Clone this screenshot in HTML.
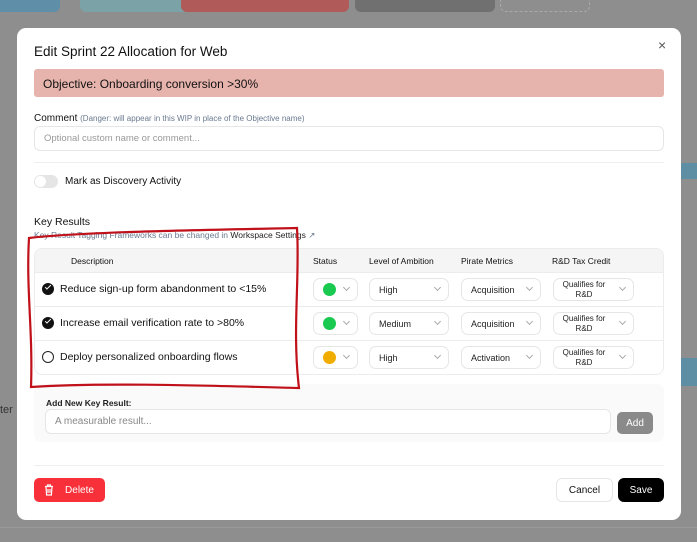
<!DOCTYPE html>
<html><head><style>
*{box-sizing:border-box;margin:0;padding:0}
body{width:697px;height:542px;overflow:hidden;background:#8e8e8e;font-family:"Liberation Sans",sans-serif;position:relative;color:#111}
.a{position:absolute}
.chip{position:absolute;top:-6px;height:18px;border-radius:6px}
.modal{position:absolute;left:17px;top:28px;width:664px;height:492px;background:#fff;border-radius:9px}
.sel{position:absolute;height:23px;border:1px solid #e6e6e6;border-radius:7px;background:#fff;font-size:9px;color:#222;display:flex;align-items:center;padding-left:9px}
.chev{position:absolute;right:8px;top:6px;width:5px;height:5px;border-right:1px solid #aaa;border-bottom:1px solid #aaa;transform:rotate(45deg)}
.dot{width:13px;height:13px;border-radius:50%}
.row{position:absolute;left:0;width:630px;height:34px;border-top:1px solid #ececec}
.desc{position:absolute;left:25px;top:10px;font-size:10.5px;color:#111}
.chk{position:absolute;left:7px;top:10px;width:12px;height:12px;border-radius:50%}
.btn{position:absolute;display:flex;align-items:center;justify-content:center;font-size:10px}
</style></head><body>
<div class="chip" style="left:-10px;width:70px;background:#5f8fa8"></div>
<div class="chip" style="left:80px;width:125px;background:#7ba2a6"></div>
<div class="chip" style="left:181px;width:168px;background:#b05a5a"></div>
<div class="chip" style="left:355px;width:140px;background:#707070"></div>
<div class="chip" style="left:500px;width:90px;border:1px dashed #aaa;background:#8e8e8e"></div>
<div class="a" style="left:680px;top:163px;width:17px;height:16px;background:#5e8ea3"></div>
<div class="a" style="left:680px;top:358px;width:17px;height:28px;background:#5e8ea3"></div>
<div class="a" style="left:0;top:404px;font-size:11px;color:#333">ter</div>
<div class="a" style="left:0;top:527px;width:697px;height:1px;background:#999"></div>

<div class="modal">
 <div class="a" style="left:17px;top:16px;font-size:13.5px">Edit Sprint 22 Allocation for Web</div>
 <div class="a" style="left:641px;top:9px;font-size:14px;color:#555">×</div>
 <div class="a" style="left:17px;top:41px;width:630px;height:28px;background:#e7b4ad;border-radius:3px;font-size:12px;padding:8px 9px">Objective: Onboarding conversion &gt;30%</div>
 <div class="a" style="left:17px;top:85px;font-size:10px">Comment <span style="font-size:8px;color:#6a7a90">(Danger: will appear in this WIP in place of the Objective name)</span></div>
 <div class="a" style="left:17px;top:98px;width:630px;height:25px;border:1px solid #e6e6e6;border-radius:6px;font-size:9.5px;color:#999;padding:6px 9px">Optional custom name or comment...</div>
 <div class="a" style="left:17px;top:134px;width:630px;height:1px;background:#eceef2"></div>
 <div class="a" style="left:17px;top:147px;width:24px;height:13px;border-radius:7px;background:#e5e5e5"><div style="margin:1px;width:11px;height:11px;border-radius:50%;background:#fff"></div></div>
 <div class="a" style="left:48px;top:148px;font-size:10px">Mark as Discovery Activity</div>
 <div class="a" style="left:17px;top:188px;font-size:10.5px">Key Results</div>
 <div class="a" style="left:17px;top:202px;font-size:8.5px;color:#6a7a90">Key Result Tagging Frameworks can be changed in <span style="color:#222">Workspace Settings</span> ↗</div>
 <div class="a" style="left:17px;top:220px;width:630px;height:127px;border:1px solid #ececec;border-radius:8px;overflow:hidden">
  <div class="a" style="left:0;top:0;width:630px;height:23px;background:#f5f5f5;font-size:8.5px">
   <span class="a" style="left:36px;top:7px">Description</span>
   <span class="a" style="left:278px;top:7px">Status</span>
   <span class="a" style="left:334px;top:7px">Level of Ambition</span>
   <span class="a" style="left:426px;top:7px">Pirate Metrics</span>
   <span class="a" style="left:517px;top:7px">R&amp;D Tax Credit</span>
  </div>
  <div class="row" style="top:23px"><div class="chk" style="background:#111"></div><div class="a" style="left:10px;top:12px;width:6px;height:3px;border-left:1.5px solid #fff;border-bottom:1.5px solid #fff;transform:rotate(-45deg)"></div><div class="desc">Reduce sign-up form abandonment to &lt;15%</div>
   <div class="sel" style="left:278px;top:5px;width:45px"><div class="dot" style="background:#1ac950"></div><div class="chev"></div></div>
   <div class="sel" style="left:334px;top:5px;width:80px">High<div class="chev"></div></div>
   <div class="sel" style="left:426px;top:5px;width:80px">Acquisition<div class="chev"></div></div>
   <div class="sel" style="left:518px;top:5px;width:81px;font-size:8px;line-height:10px;text-align:center;padding-left:0;justify-content:flex-start"><span style="width:60px">Qualifies for R&amp;D</span><div class="chev"></div></div>
  </div>
  <div class="row" style="top:57px"><div class="chk" style="background:#111"></div><div class="a" style="left:10px;top:12px;width:6px;height:3px;border-left:1.5px solid #fff;border-bottom:1.5px solid #fff;transform:rotate(-45deg)"></div><div class="desc">Increase email verification rate to &gt;80%</div>
   <div class="sel" style="left:278px;top:5px;width:45px"><div class="dot" style="background:#1ac950"></div><div class="chev"></div></div>
   <div class="sel" style="left:334px;top:5px;width:80px">Medium<div class="chev"></div></div>
   <div class="sel" style="left:426px;top:5px;width:80px">Acquisition<div class="chev"></div></div>
   <div class="sel" style="left:518px;top:5px;width:81px;font-size:8px;line-height:10px;text-align:center;padding-left:0;justify-content:flex-start"><span style="width:60px">Qualifies for R&amp;D</span><div class="chev"></div></div>
  </div>
  <div class="row" style="top:91px"><div class="chk" style="border:1px solid #222"></div><div class="desc">Deploy personalized onboarding flows</div>
   <div class="sel" style="left:278px;top:5px;width:45px"><div class="dot" style="background:#f0ad00"></div><div class="chev"></div></div>
   <div class="sel" style="left:334px;top:5px;width:80px">High<div class="chev"></div></div>
   <div class="sel" style="left:426px;top:5px;width:80px">Activation<div class="chev"></div></div>
   <div class="sel" style="left:518px;top:5px;width:81px;font-size:8px;line-height:10px;text-align:center;padding-left:0;justify-content:flex-start"><span style="width:60px">Qualifies for R&amp;D</span><div class="chev"></div></div>
  </div>
 </div>
 <div class="a" style="left:17px;top:356px;width:630px;height:58px;background:#fafafa;border-radius:7px">
  <div class="a" style="left:12px;top:14px;font-size:8.5px;font-weight:bold;color:#222">Add New Key Result:</div>
  <div class="a" style="left:11px;top:25px;width:566px;height:25px;background:#fff;border:1px solid #e6e6e6;border-radius:6px;font-size:10px;color:#888;padding:6px 9px">A measurable result...</div>
  <div class="btn" style="left:583px;top:28px;width:36px;height:22px;background:#8a8a8a;border-radius:5px;color:#fff">Add</div>
 </div>
 <div class="a" style="left:17px;top:437px;width:630px;height:1px;background:#eceef2"></div>
 <div class="btn" style="left:17px;top:450px;width:71px;height:24px;background:#f7303a;border-radius:5px;color:#fff;padding-left:20px">Delete
  <svg class="a" style="left:10px;top:6px" width="10" height="12" viewBox="0 0 10 12" fill="none" stroke="#fff" stroke-width="1.2"><path d="M1 2.5h8M3.5 2.5V1h3v1.5M2 2.5l.6 8.5h4.8L8 2.5M4 5v4M6 5v4"/></svg></div>
 <div class="btn" style="left:539px;top:450px;width:57px;height:24px;border:1px solid #e6e6e6;border-radius:6px">Cancel</div>
 <div class="btn" style="left:601px;top:450px;width:46px;height:24px;background:#000;border-radius:6px;color:#fff">Save</div>
</div>
<svg class="a" style="left:0;top:0" width="697" height="542"><path d="M29 238 C80 232 200 230 297 228 C300 280 292 330 299 388 C220 386 100 382 31 387 C33 330 26 290 29 238Z" fill="none" stroke="#c0101a" stroke-width="2.2"/></svg>
</body></html>
